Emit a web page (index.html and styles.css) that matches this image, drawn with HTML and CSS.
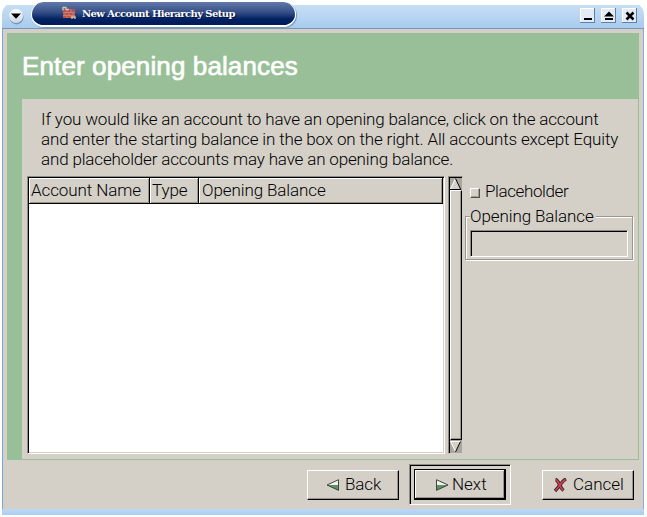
FILE: index.html
```
<!DOCTYPE html>
<html lang="en">
<head>
<meta charset="utf-8">
<title>New Account Hierarchy Setup</title>
<link rel="stylesheet" href="styles.css">
</head>
<body>
<div class="window">
  <header class="titlebar">
    <svg class="menu" width="16" height="17" viewBox="0 0 16 17"><defs><linearGradient id="ball" x2="0" y2="1"><stop offset="0" stop-color="#fff"/><stop offset="1" stop-color="#cbd7e7"/></linearGradient></defs><circle cx="8.5" cy="9.4" r="7" fill="#7794b8"/><circle cx="8" cy="8" r="7" fill="url(#ball)"/><path d="M3 5.500h10L8 10.700z" fill="#000"/></svg>
    <div class="caption">
      <svg class="appicon" width="14" height="14" viewBox="0 0 14 14"><path d="M1 3h12v9H1z" fill="#b3524c"/><path d="M1 6.500h12M1 9.500h12" stroke="#d98d80" stroke-width=".7"/><path d="M5 3v3.500M9 3v3.500M3 6.500v3M7 6.500v3M11 6.500v3M5 9.500V12M9 9.500V12" stroke="#d98d80" stroke-width=".7"/><path d="M1 4.500V1.500h3v2h3M10 13v-2h3v2" fill="none" stroke="#d8c4a4" stroke-width="1.300"/></svg>
      <span class="caption-text">New Account Hierarchy Setup</span>
    </div>
    <div class="controls">
      <svg width="15" height="15" viewBox="0 0 15 15"><path d="M0 0h15v15H0z" fill="#5c82ac"/><path d="M0 0h14v14H0z" fill="#fff"/><path d="M1 1h13v13H1z" fill="#e4ebf4"/><path d="M4 10h8v2H4z"/></svg>
      <svg width="15" height="15" viewBox="0 0 15 15"><path d="M0 0h15v15H0z" fill="#5c82ac"/><path d="M0 0h14v14H0z" fill="#fff"/><path d="M1 1h13v13H1z" fill="#e4ebf4"/><path d="M3 8.500h10L8 3.500zM4 10h8v2H4z"/></svg>
      <svg width="15" height="15" viewBox="0 0 15 15"><path d="M0 0h15v15H0z" fill="#5c82ac"/><path d="M0 0h14v14H0z" fill="#fff"/><path d="M1 1h13v13H1z" fill="#e4ebf4"/><path d="M4.500 4.500l7 7M11.500 4.500l-7 7" stroke="#000" stroke-width="2.500"/></svg>
    </div>
  </header>
  <main class="client">
    <section class="page">
      <h1><span>Enter opening balances</span></h1>
      <div class="panel">
        <p class="intro"><span>If you would like an account to have an opening balance, click on the account</span><br><span>and enter the starting balance in the box on the right. All accounts except Equity</span><br><span>and placeholder accounts may have an opening balance.</span></p>
        <div class="columns">
          <div class="list">
            <div class="head">
              <div class="cell name"><span>Account Name</span></div>
              <div class="cell type"><span>Type</span></div>
              <div class="cell open"><span>Opening Balance</span></div>
            </div>
          </div>
          <div class="scroll">
            <svg width="11" height="12" viewBox="0 0 11 12"><path d="M5.500 0L0 11h11z" fill="#d4d0c8"/><path d="M.5 11L5.500 .5" stroke="#fff"/><path d="M5.500 .5L10.500 11M0 11.500h11" stroke="#000"/></svg>
            <div class="thumb"></div>
            <svg width="11" height="13" viewBox="0 0 11 13"><path d="M0 1h11L5.500 12z" fill="#d4d0c8"/><path d="M0 1.500h11M.5 1l5 11" stroke="#fff" fill="none"/><path d="M10.500 1.500L5.500 12" stroke="#000"/></svg>
          </div>
          <div class="side">
            <label class="check"><i></i><span>Placeholder</span></label>
            <div class="group">
              <div class="legend"><span>Opening Balance</span></div>
              <div class="entry"></div>
            </div>
          </div>
        </div>
      </div>
    </section>
    <footer class="actions">
      <div class="button back"><svg width="14" height="12" viewBox="0 0 14 12"><path d="M1 6L12.500 .5V6z" fill="#eff1ed"/><path d="M1 6h11.500v5.500z" fill="#5d9361"/><path d="M12.500 .7L1 6l11.500 5.300z" fill="none" stroke="#40463f"/></svg><span>Back</span></div>
      <div class="default"><div class="button next"><svg width="14" height="12" viewBox="0 0 14 12"><path d="M1.500 .5L13 6H1.500z" fill="#eff1ed"/><path d="M1.500 6H13L1.500 11.500z" fill="#5d9361"/><path d="M1.500 .7L13 6 1.500 11.300z" fill="none" stroke="#40463f"/></svg><span>Next</span></div></div>
      <div class="button cancel"><svg width="14" height="14" viewBox="0 0 14 14"><path d="M2.500 1.500C6 2 6 9 10.500 12.500M13 1C9 3 6 9 2 13" fill="none" stroke="#35191b" stroke-width="3.400"/><path d="M2.800 1.800C6 2.500 6 9 10.300 12.200M12.600 1.500C9 3 6 9 2.300 12.600" fill="none" stroke="#bd4353" stroke-width="1.900"/></svg><span>Cancel</span></div>
    </footer>
  </main>
</div>
</body>
</html>
```
FILE: styles.css
```
* { box-sizing: border-box; }
body { margin: 0; background: #fff; color: #000; font: 300 17px/20px Roboto, "Liberation Sans", Arial, sans-serif; }
svg { display: block; flex: none; }
span { white-space: nowrap; }
.window { width: 642px; height: 513px; margin: 2px 0 0 2px; display: flex; flex-direction: column; }
.titlebar { height: 27px; display: flex; align-items: flex-start; background: linear-gradient(#c8dff5, #a4c8ee) 0 3px no-repeat; border-bottom: 1px solid #7796bb; border-radius: 13px 13px 0 0; }
.menu { margin: 6px 0 0 6px; }
.caption { width: 265px; height: 25px; margin-left: 7px; padding: 4px 0 0 30px; display: flex; background: linear-gradient(#6279a9, #344f86 45%, #002161 75%, #001b59); border: solid #fff; border-width: 0 1px 2px; border-radius: 13px; box-shadow: 1px 1px 1px #7796bb; }
.caption-text { margin: -2px 0 0 6px; color: #fff; font: bold 10px/20px "DejaVu Serif", serif; letter-spacing: -.58px; text-shadow: 1px 1px 1px #001344; }
.controls { margin: 6px 7px 0 auto; display: flex; gap: 6px; }
.client { height: 480px; padding: 4px 4px 0; background: #d4d0c8; border-left: 1px solid #7da5d4; border-right: 1px solid #91a9ca; }
.window::after { content: ""; height: 6px; background: linear-gradient(#bdd8f3, #a9cff3); }
.page { width: 632px; height: 427px; padding: 0 1px 1px 15px; background: #99bf98; }
h1 { margin: 0; height: 66px; padding-top: 18px; color: #fff; font: 400 26px/30px "Liberation Sans", Arial, sans-serif; letter-spacing: .12px; -webkit-text-stroke: .65px #fff; }
.panel { height: 360px; padding: 10px 0 0 5px; background: #d4d0c8; }
.intro { margin: 0 0 7px 14px; height: 60px; letter-spacing: -.155px; }
.columns { display: flex; }
.list { width: 418px; height: 278px; background: #fff; border: 1px solid; border-color: #8f8c83 #fff #fff #8f8c83; box-shadow: inset 1px 1px #000, inset -1px -1px #d4d0c8; padding: 1px; }
.head { display: flex; }
.cell { height: 26px; padding: 2px 0 0 2px; background: #d4d0c8; border: solid #000; border-width: 0 1px 1px 0; box-shadow: inset 1px 1px #fff, inset -1px -1px #99958a; letter-spacing: -.1px; }
.name { width: 121px; } .type { width: 49px; } .open { width: 244px; padding-left: 3px; }
.scroll { width: 15px; height: 278px; margin-left: 3px; padding: 1px; background: #aaa69d; border: 1px solid; border-color: #8f8c83 #d4d0c8 #d4d0c8 #8f8c83; box-shadow: inset 1px 1px #000; }
.thumb { height: 250px; width: 12px; background: #d4d0c8; border: solid; border-color: #fff #000 #000 #fff; border-width: 1px 1px 1px 1px; box-shadow: inset -1px -1px #99958a; }
.side { width: 168px; margin-left: 2px; padding-top: 5px; }
.check { display: flex; height: 20px; padding-left: 5px; letter-spacing: -.4px; }
.check i { width: 10px; height: 10px; margin: 7px 5px 0 0; border: 1px solid; border-color: #fff #555148 #555148 #fff; box-shadow: inset -1px -1px #a19d94; }
.group { height: 44px; margin-top: 15px; border: 1px solid #99958a; box-shadow: inset 1px 1px #fff, 1px 1px #fff; padding: 0 4px; }
.legend { width: 126px; height: 14px; background: #d4d0c8; margin-top: -1px; line-height: 0; letter-spacing: -.1px; }
.entry { width: 158px; height: 27px; background: #d4d0c8; border: 1px solid; border-color: #8f8c83 #fff #fff #8f8c83; box-shadow: inset 1px 1px #000; }
.actions { display: flex; padding-top: 4px; height: 45px; }
.button { width: 92px; height: 30px; display: flex; padding-top: 3px; border: 1px solid; border-color: #fff #000 #000 #fff; box-shadow: inset -1px -1px #99958a; }
.back { margin: 6px 0 0 300px; padding-left: 18px; letter-spacing: -.1px; }
.back svg { margin: 5px 5px 0 0; }
.default { width: 102px; height: 41px; margin-left: 10px; padding: 4px; border: 1px solid; border-color: #8f8c83 #fff #fff #8f8c83; box-shadow: inset 1px 1px #000; }
.next { height: 31px; padding: 4px 0 0 20px; border-color: #000; border-width: 1px 2px 2px 1px; box-shadow: inset 1px 1px #fff, inset -1px -1px #99958a; }
.next svg { margin: 5px 3px 0 0; }
.cancel { margin: 6px 0 0 31px; padding-left: 10px; }
.cancel svg { margin: 4px 6px 0 0; }
```
